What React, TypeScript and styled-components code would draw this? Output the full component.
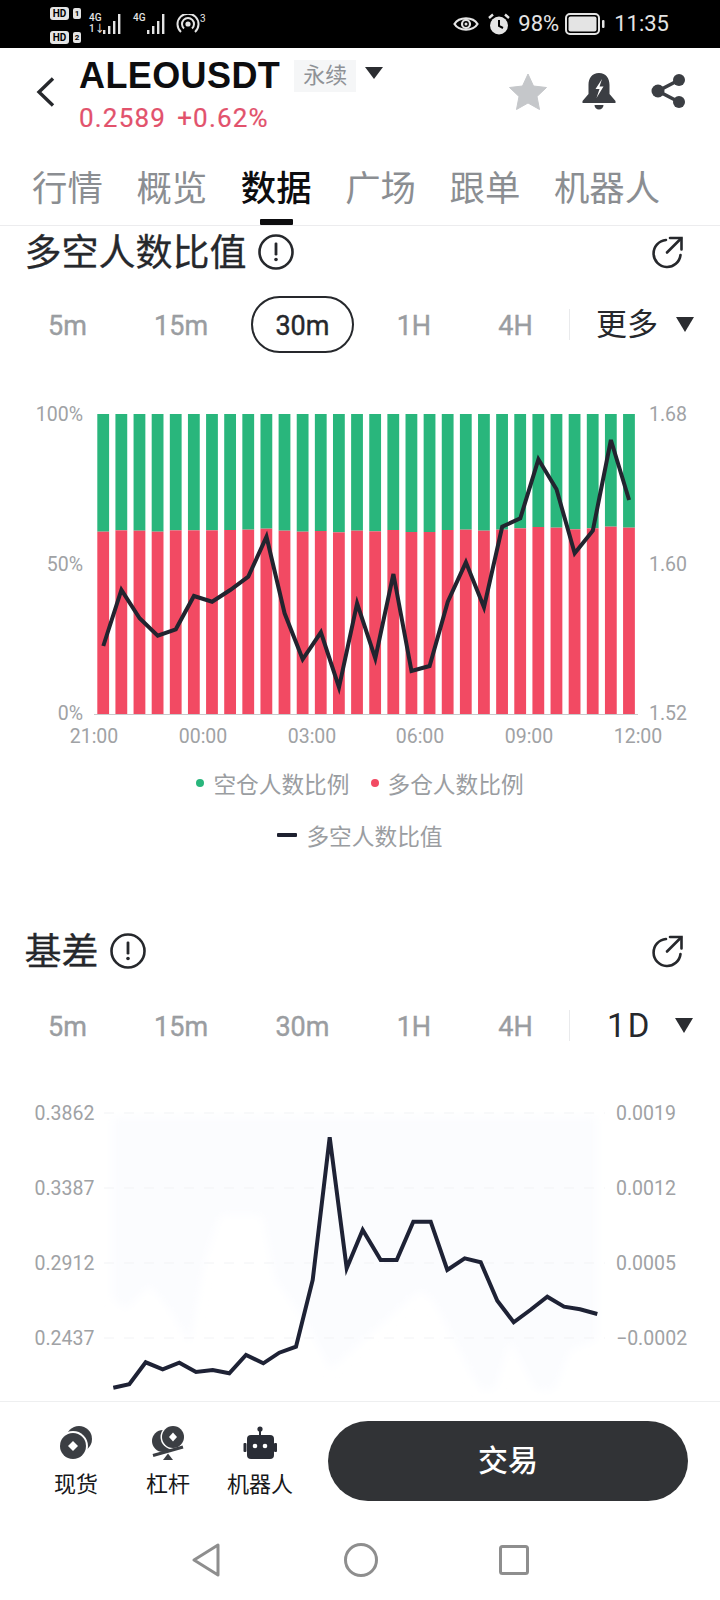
import styled, { createGlobalStyle } from "styled-components";

const GlobalStyle = createGlobalStyle`
  html, body {
    margin: 0;
    padding: 0;
    background: #fff;
  }
  * {
    box-sizing: border-box;
  }
`;

const FONT = `Roboto, "Noto Sans CJK SC", sans-serif`;

const Page = styled.div`
  width: 720px;
  height: 1600px;
  display: flex;
  flex-direction: column;
  background: #fff;
  font-family: ${FONT};
  overflow: hidden;
`;

/* status bar */
const StatusBar = styled.div`
  height: 48px;
  flex: none;
  background: #000;
  color: #e4e4e4;
  display: flex;
  align-items: center;
  padding: 0 51px 0 50px;
`;

const SimStack = styled.div`
  width: 33px;
  display: flex;
  flex-direction: column;
  gap: 11px;
  margin-top: 2px;
`;

const SimRow = styled.div`
  display: flex;
  align-items: center;
  gap: 4px;
`;

const HdBadge = styled.span`
  width: 19px;
  height: 13px;
  border-radius: 3px;
  background: #e4e4e4;
  color: #000;
  font-size: 10px;
  line-height: 13px;
  font-weight: 700;
  text-align: center;
`;

const SimNo = styled.span`
  width: 8px;
  height: 11px;
  border-radius: 2px;
  background: #e4e4e4;
  color: #000;
  font-size: 8px;
  line-height: 11px;
  font-weight: 700;
  text-align: center;
`;

const SignalGroup = styled.div<{ $left: number }>`
  display: flex;
  align-items: flex-start;
  margin-left: ${(p) => p.$left}px;
  height: 24px;
`;

const NetColumn = styled.div`
  display: flex;
  flex-direction: column;
  font-size: 10px;
  line-height: 11px;
  font-weight: 500;
  width: 14px;
`;

const Hotspot = styled.div`
  display: flex;
  align-items: flex-start;
  margin-left: 7px;
  font-size: 10px;
  line-height: 10px;
`;

const StatusRight = styled.div`
  margin-left: auto;
  display: flex;
  align-items: center;
  font-size: 22px;
  line-height: 48px;
`;

const StatusText = styled.span<{ $left: number }>`
  margin-left: ${(p) => p.$left}px;
`;

/* header */
const Header = styled.div`
  height: 104px;
  flex: none;
  display: flex;
  padding: 12px 34px 0 36px;
`;

const Back = styled.div`
  width: 43px;
  padding-top: 17px;
  flex: none;
`;

const NameColumn = styled.div`
  display: flex;
  flex-direction: column;
`;

const NameRow = styled.div`
  display: flex;
  align-items: center;
  height: 32px;
`;

const Symbol = styled.span`
  font-family: "Liberation Sans", sans-serif;
  font-size: 36px;
  line-height: 32px;
  font-weight: 700;
  color: #0d0d0f;
  letter-spacing: 0.4px;
`;

const Tag = styled.span`
  margin-left: 14px;
  width: 62px;
  height: 32px;
  background: #f5f6f7;
  color: #8f9296;
  font-size: 22px;
  line-height: 32px;
  text-align: center;
`;

const Caret = styled.span<{ $w?: number; $h?: number; $color?: string }>`
  width: 0;
  height: 0;
  flex: none;
  border-left: ${(p) => (p.$w ?? 18) / 2}px solid transparent;
  border-right: ${(p) => (p.$w ?? 18) / 2}px solid transparent;
  border-top: ${(p) => p.$h ?? 15}px solid ${(p) => p.$color ?? "#2b2d31"};
`;

const TagCaret = styled(Caret)`
  margin-left: 9px;
  margin-top: -6px;
`;

const PriceRow = styled.div`
  display: flex;
  gap: 11px;
  margin-top: 13px;
  color: #e2526c;
  font-size: 26px;
  line-height: 26px;
  letter-spacing: 1.2px;
  -webkit-text-stroke: 0.2px #e2526c;
`;

const HeaderActions = styled.div`
  margin-left: auto;
  display: flex;
  gap: 35px;
  padding-top: 13px;
  height: 50px;
`;

const Tabs = styled.div`
  height: 74px;
  flex: none;
  display: flex;
  gap: 33.6px;
  padding: 16px 0 0 32px;
  border-bottom: 1px solid #ececee;
`;

const Tab = styled.div<{ $active?: boolean }>`
  position: relative;
  height: 57px;
  font-size: 35.4px;
  line-height: 42px;
  font-weight: ${(p) => (p.$active ? 500 : 400)};
  color: ${(p) => (p.$active ? "#0d0d0f" : "#8b8e92")};

  &::after {
    content: "";
    display: ${(p) => (p.$active ? "block" : "none")};
    position: absolute;
    left: 19px;
    bottom: 0;
    width: 33px;
    height: 6px;
    border-radius: 1px;
    background: #0d0d0f;
  }
`;

const Content = styled.div`
  flex: 1;
  min-height: 0;
  overflow: hidden;
`;

/* section */
const SectionHead = styled.div<{ $top: number }>`
  height: 52px;
  margin-top: ${(p) => p.$top}px;
  padding: 0 36px 0 24.5px;
  display: flex;
  align-items: center;
`;

const SectionTitle = styled.h2`
  margin: 0;
  padding-top: 3px;
  font-size: 37px;
  line-height: 49px;
  font-weight: 400;
  color: #26282c;
  -webkit-text-stroke: 0.3px #26282c;
`;

const InfoWrap = styled.span`
  margin-left: 11px;
  display: flex;
`;

const ExportWrap = styled.span`
  margin-left: auto;
  display: flex;
`;

const RangeRow = styled.div<{ $top: number }>`
  height: 57px;
  margin-top: ${(p) => p.$top}px;
  padding: 0 27px 0 25.5px;
  display: flex;
  align-items: center;
  gap: 22.25px;
`;

const RangeItem = styled.div<{ $active?: boolean }>`
  height: 57px;
  padding: 0 22.5px;
  border-radius: 29px;
  border: 2px solid ${(p) => (p.$active ? "#26282c" : "transparent")};
  color: ${(p) => (p.$active ? "#26282c" : "#9a9da1")};
  font-size: 27px;
  line-height: 56px;
  font-weight: 400;
  -webkit-text-stroke: 0.4px currentColor;
  margin: 0 -2px;
  white-space: nowrap;
`;

const RangeDivider = styled.div`
  width: 1px;
  height: 31px;
  flex: none;
  background: #e9eaec;
  margin-left: -8.5px;
`;

const RangeMore = styled.div<{ $gap: number; $left: number }>`
  margin-left: ${(p) => p.$left}px;
  display: flex;
  align-items: center;
  gap: ${(p) => p.$gap}px;
  color: #26282c;
  font-size: 31px;
  line-height: 57px;
  white-space: nowrap;
`;

const DayLabel = styled.span`
  font-size: 33px;
  letter-spacing: 2px;
`;

const ChartSvg = styled.svg<{ $top: number }>`
  display: block;
  margin-top: ${(p) => p.$top}px;
`;

const AxisText = styled.text`
  font-family: ${FONT};
  font-size: 19.5px;
  fill: #a0a2a5;
`;

const Legend = styled.div`
  margin-top: -2px;
`;

const LegendRow = styled.div`
  height: 52px;
  display: flex;
  align-items: center;
  justify-content: center;
  gap: 21px;
`;

const LegendItem = styled.div`
  display: flex;
  align-items: center;
  gap: 9px;
  font-size: 22.7px;
  color: #9a9da1;
`;

const LegendDot = styled.span<{ $color: string }>`
  width: 8px;
  height: 8px;
  border-radius: 50%;
  background: ${(p) => p.$color};
`;

const LegendDash = styled.span`
  width: 20px;
  height: 4px;
  border-radius: 1px;
  background: #1e2130;
`;

/* bottom */
const BottomBar = styled.div`
  height: 120px;
  flex: none;
  display: flex;
  padding-left: 30px;
  border-top: 1px solid #eeeff0;
`;

const BottomItem = styled.div`
  width: 92px;
  padding-top: 24px;
  display: flex;
  flex-direction: column;
  align-items: center;
  gap: 12px;
  font-size: 22px;
  line-height: 26px;
  color: #17181a;
`;

const TradeButton = styled.div`
  width: 360px;
  height: 80px;
  margin: 19px 0 0 22px;
  border-radius: 40px;
  background: #313336;
  color: #fff;
  font-size: 30px;
  font-weight: 500;
  line-height: 80px;
  text-align: center;
`;

const NavBar = styled.div`
  height: 79px;
  flex: none;
  display: flex;
  align-items: center;
  padding: 0 0 2px 192px;
  gap: 124px;
`;

const INK = "#3b3e43";

const BARS = [
  395, 391, 392, 395, 391, 391, 391, 390, 389, 386, 392, 395, 393, 397, 392, 394, 390, 396, 396,
  390, 389, 392, 389, 385, 381, 383, 388, 385, 380, 383,
].map((v) => 400 + v / 3);

const RATIO_LINE = [
  738, 570, 655, 707, 688, 588, 605, 570, 530, 410, 640, 778, 697, 862, 610, 775, 522, 813, 798,
  605, 487, 622, 380, 355, 178, 268, 460, 392, 120, 300,
].map((v, i) => `${(103.3 + i * 18.13).toFixed(1)},${(400 + v / 3).toFixed(1)}`);

const BASIS_LINE: [number, number][] = [
  [340, 893], [388, 883], [437, 817], [488, 838], [538, 818], [588, 846], [638, 840], [688, 850],
  [738, 795], [790, 820], [838, 788], [888, 770], [938, 570], [989, 142], [1040, 535], [1088, 420],
  [1142, 510], [1190, 510], [1240, 395], [1292, 395], [1342, 540], [1394, 505], [1442, 517],
  [1492, 632], [1541, 697], [1591, 660], [1642, 620], [1692, 650], [1740, 658], [1792, 672],
];

function InfoIcon() {
  return (
    <svg width="36" height="36" viewBox="0 0 36 36">
      <circle cx="18" cy="18" r="16.5" fill="none" stroke="#26282c" strokeWidth="2.6" />
      <rect x="16.6" y="8.5" width="2.8" height="13" rx="1.2" fill="#26282c" />
      <circle cx="18" cy="25.5" r="1.8" fill="#26282c" />
    </svg>
  );
}

function ExportIcon() {
  return (
    <svg width="34" height="34" viewBox="0 0 34 34" fill="none" stroke="#26282c" strokeWidth="2.6" strokeLinecap="round">
      <path d="M16 5A13.5 13.5 0 1 0 30.5 20" />
      <path d="M20 3H31.5V14.5" />
      <path d="M31 3.5L17 17.5" />
    </svg>
  );
}

function Signal() {
  return (
    <svg width="22" height="23" viewBox="0 0 22 23" fill="#e4e4e4">
      <rect x="0" y="18" width="2.4" height="4" />
      <rect x="5" y="14" width="2.4" height="8" />
      <rect x="10" y="9" width="2.4" height="13" />
      <rect x="15" y="2" width="2.4" height="20" />
    </svg>
  );
}

function TimeRange({ active, more, top }: { active?: string; more: "more" | "day"; top: number }) {
  return (
    <RangeRow $top={top}>
      {["5m", "15m", "30m", "1H", "4H"].map((r) => (
        <RangeItem key={r} $active={r === active}>
          {r}
        </RangeItem>
      ))}
      <RangeDivider />
      {more === "more" ? (
        <RangeMore $left={3.8} $gap={18}>
          更多 <Caret />
        </RangeMore>
      ) : (
        <RangeMore $left={14.8} $gap={24}>
          <DayLabel>1D</DayLabel> <Caret />
        </RangeMore>
      )}
    </RangeRow>
  );
}

function RatioChart() {
  return (
    <ChartSvg $top={47} width="720" height="359" viewBox="0 400 720 359">
      {BARS.map((top, i) => {
        const x = 97.3 + i * 18.13;
        return (
          <g key={i}>
            <rect x={x} y={414} width={11.8} height={top - 414} fill="#29b67c" />
            <rect x={x} y={top} width={11.8} height={714 - top} fill="#f24a63" />
          </g>
        );
      })}
      <line x1="94" y1="714.5" x2="638" y2="714.5" stroke="#c9cacc" strokeWidth="1" />
      <polyline points={RATIO_LINE.join(" ")} fill="none" stroke="#22242f" strokeWidth="4" strokeLinejoin="miter" />
      {[["100%", 421], ["50%", 571], ["0%", 720]].map(([t, y]) => (
        <AxisText key={t} x="83" y={y} textAnchor="end">
          {t}
        </AxisText>
      ))}
      {[["1.68", 421], ["1.60", 571], ["1.52", 720]].map(([t, y]) => (
        <AxisText key={t} x="649" y={y}>
          {t}
        </AxisText>
      ))}
      {[["21:00", 94], ["00:00", 203], ["03:00", 312], ["06:00", 420], ["09:00", 529], ["12:00", 638]].map(([t, x]) => (
        <AxisText key={t} x={x} y="743" textAnchor="middle">
          {t}
        </AxisText>
      ))}
    </ChartSvg>
  );
}

function BasisChart() {
  const pts = BASIS_LINE.map(([x, y]) => `${(x / 3).toFixed(1)},${(1090 + y / 3).toFixed(1)}`).join(" ");
  return (
    <ChartSvg $top={36} width="720" height="310" viewBox="0 1090 720 310">
      <defs>
        <filter id="areaBlur" x="-5%" y="-5%" width="110%" height="110%">
          <feGaussianBlur stdDeviation="5" />
        </filter>
      </defs>
      <polygon
        points="112,1117 597,1117 597,1340 570,1350 555,1390 535,1390 510,1340 495,1390 480,1390 433,1300 420,1290 330,1370 310,1330 290,1300 275,1280 262,1215 220,1215 205,1260 190,1345 170,1310 150,1285 125,1310 112,1297"
        fill="#fbfcfe"
        filter="url(#areaBlur)"
      />
      {[1113, 1188, 1263, 1338].map((y) => (
        <line key={y} x1="104" y1={y} x2="605" y2={y} stroke="#f2f3f5" strokeWidth="1" strokeDasharray="10 10" />
      ))}
      <polyline points={pts} fill="none" stroke="#1e2235" strokeWidth="4" />
      {[["0.3862", 1120], ["0.3387", 1195], ["0.2912", 1270], ["0.2437", 1345]].map(([t, y]) => (
        <AxisText key={t} x="34.5" y={y}>
          {t}
        </AxisText>
      ))}
      {[["0.0019", 1120], ["0.0012", 1195], ["0.0005", 1270], ["−0.0002", 1345]].map(([t, y]) => (
        <AxisText key={t} x="616" y={y}>
          {t}
        </AxisText>
      ))}
    </ChartSvg>
  );
}

export default function App() {
  return (
    <Page>
      <GlobalStyle />
      <StatusBar>
        <SimStack>
          <SimRow>
            <HdBadge>HD</HdBadge>
            <SimNo>1</SimNo>
          </SimRow>
          <SimRow>
            <HdBadge>HD</HdBadge>
            <SimNo>2</SimNo>
          </SimRow>
        </SimStack>
        <SignalGroup $left={6}>
          <NetColumn>
            <span>4G</span>
            <span>1↓</span>
          </NetColumn>
          <Signal />
        </SignalGroup>
        <SignalGroup $left={8}>
          <NetColumn>
            <span>4G</span>
          </NetColumn>
          <Signal />
        </SignalGroup>
        <Hotspot>
          <svg width="24" height="20" viewBox="0 0 24 20" fill="none" stroke="#e4e4e4" strokeWidth="2">
            <path d="M5 18A10.5 10.5 0 1 1 19 18" />
            <path d="M8 14.5A6 6 0 1 1 16 14.5" />
            <circle cx="12" cy="10" r="1.6" fill="#e4e4e4" />
          </svg>
          <span>3</span>
        </Hotspot>
        <StatusRight>
          <svg width="26" height="18" viewBox="0 0 26 18" fill="none" stroke="#e4e4e4" strokeWidth="2.2">
            <path d="M1.5 9C6 1.5 20 1.5 24.5 9C20 16.5 6 16.5 1.5 9Z" />
            <circle cx="13" cy="9" r="4" />
            <circle cx="13" cy="9" r="1.5" fill="#e4e4e4" strokeWidth="0" />
          </svg>
          <svg width="24" height="22" viewBox="0 0 24 22" style={{ marginLeft: 8 }}>
            <circle cx="12" cy="12.5" r="9" fill="#e4e4e4" />
            <path d="M12 7V13L16 15" fill="none" stroke="#000" strokeWidth="2" />
            <path d="M2 5L6 1.5M22 5L18 1.5" stroke="#e4e4e4" strokeWidth="2.4" />
          </svg>
          <StatusText $left={7}>98%</StatusText>
          <svg width="41" height="22" viewBox="0 0 41 22" style={{ marginLeft: 6 }}>
            <rect x="1" y="1" width="33" height="20" rx="4" fill="none" stroke="#e4e4e4" strokeWidth="2" />
            <rect x="3.5" y="3.5" width="28" height="15" rx="2" fill="#e4e4e4" />
            <rect x="37" y="7" width="2.5" height="8" rx="1" fill="#e4e4e4" />
          </svg>
          <StatusText $left={8}>11:35</StatusText>
        </StatusRight>
      </StatusBar>

      <Header>
        <Back>
          <svg width="19" height="30" viewBox="0 0 19 30" fill="none" stroke="#26282c" strokeWidth="3.4">
            <path d="M17 1.5L3 15L17 28.5" />
          </svg>
        </Back>
        <NameColumn>
          <NameRow>
            <Symbol>ALEOUSDT</Symbol>
            <Tag>永续</Tag>
            <TagCaret $w={18} $h={12} />
          </NameRow>
          <PriceRow>
            <span>0.2589</span>
            <span>+0.62%</span>
          </PriceRow>
        </NameColumn>
        <HeaderActions>
          <svg width="38" height="37" viewBox="0 0 38 37">
            <path
              d="M19 1L24.5 13L37.5 14.5L28 23.5L30.5 36.5L19 30L7.5 36.5L10 23.5L0.5 14.5L13.5 13Z"
              fill="#c5c7ca"
              stroke="#c5c7ca"
              strokeWidth="1"
              strokeLinejoin="round"
            />
          </svg>
          <svg width="34" height="37" viewBox="0 0 34 37" fill={INK}>
            <path d="M17 0C24 0 27.5 5 27.5 12V21L33.5 28V30H0.5V28L6.5 21V12C6.5 5 10 0 17 0Z" />
            <path d="M12.5 32H21.5A4.5 4.5 0 0 1 12.5 32Z" />
            <path d="M20 6L13.5 16H17.5L14.5 25L21.5 13.5H17.5Z" fill="#fff" />
          </svg>
          <svg width="35" height="36" viewBox="0 0 35 36" fill={INK} stroke={INK}>
            <path d="M28 7L7 18L28 29" fill="none" strokeWidth="3.6" />
            <circle cx="28" cy="7" r="6" strokeWidth="0" />
            <circle cx="7" cy="18" r="6.5" strokeWidth="0" />
            <circle cx="28" cy="29" r="6" strokeWidth="0" />
          </svg>
        </HeaderActions>
      </Header>

      <Tabs>
        {["行情", "概览", "数据", "广场", "跟单", "机器人"].map((t) => (
          <Tab key={t} $active={t === "数据"}>
            {t}
          </Tab>
        ))}
      </Tabs>

      <Content>
        <SectionHead $top={0}>
          <SectionTitle>多空人数比值</SectionTitle>
          <InfoWrap>
            <InfoIcon />
          </InfoWrap>
          <ExportWrap>
            <ExportIcon />
          </ExportWrap>
        </SectionHead>
        <TimeRange active="30m" more="more" top={18} />
        <RatioChart />
        <Legend>
          <LegendRow>
            <LegendItem>
              <LegendDot $color="#29b67c" />
              空仓人数比例
            </LegendItem>
            <LegendItem>
              <LegendDot $color="#f24a63" />
              多仓人数比例
            </LegendItem>
          </LegendRow>
          <LegendRow>
            <LegendItem>
              <LegendDash />
              多空人数比值
            </LegendItem>
          </LegendRow>
        </Legend>

        <SectionHead $top={64}>
          <SectionTitle>基差</SectionTitle>
          <InfoWrap>
            <InfoIcon />
          </InfoWrap>
          <ExportWrap>
            <ExportIcon />
          </ExportWrap>
        </SectionHead>
        <TimeRange more="day" top={20} />
        <BasisChart />
      </Content>

      <BottomBar>
        <BottomItem>
          <svg width="34" height="34" viewBox="0 0 34 34">
            <circle cx="20" cy="13" r="13" fill={INK} />
            <circle cx="14" cy="20" r="15" fill="#fff" />
            <circle cx="14" cy="20" r="13" fill={INK} />
            <path d="M14 15L19 20L14 25L9 20Z" fill="#fff" />
          </svg>
          现货
        </BottomItem>
        <BottomItem>
          <svg width="34" height="34" viewBox="0 0 34 34">
            <circle cx="12" cy="15" r="11" fill={INK} />
            <circle cx="22" cy="11" r="12.5" fill="#fff" />
            <circle cx="22" cy="11" r="11" fill={INK} />
            <path d="M22 6.5L26 11L22 15.5L18 11Z" fill="#fff" />
            <path d="M2 29.5L32 21" stroke={INK} strokeWidth="3.2" />
            <path d="M12 34L17 27.5L22 34Z" fill={INK} />
          </svg>
          杠杆
        </BottomItem>
        <BottomItem>
          <svg width="34" height="34" viewBox="0 0 34 34" fill="#2a2d36">
            <circle cx="17" cy="3" r="2.6" />
            <rect x="16" y="3" width="2" height="7" />
            <rect x="4" y="9" width="27" height="24" rx="4" />
            <rect x="0.5" y="17" width="3" height="9" rx="1" />
            <rect x="31" y="17" width="3" height="9" rx="1" />
            <circle cx="12" cy="20" r="2.3" fill="#fff" />
            <circle cx="22" cy="20" r="2.3" fill="#fff" />
          </svg>
          机器人
        </BottomItem>
        <TradeButton>交易</TradeButton>
      </BottomBar>

      <NavBar>
        <svg width="28" height="34" viewBox="0 0 28 34" fill="none" stroke="#8e8e8e" strokeWidth="3" strokeLinejoin="round">
          <path d="M26 2V32L2 17Z" />
        </svg>
        <svg width="34" height="34" viewBox="0 0 34 34" fill="none" stroke="#8e8e8e" strokeWidth="3">
          <circle cx="17" cy="17" r="15.5" />
        </svg>
        <svg width="30" height="30" viewBox="0 0 30 30" fill="none" stroke="#8e8e8e" strokeWidth="3" style={{ marginLeft: -3 }}>
          <rect x="1.5" y="1.5" width="27" height="27" rx="2" />
        </svg>
      </NavBar>
    </Page>
  );
}
